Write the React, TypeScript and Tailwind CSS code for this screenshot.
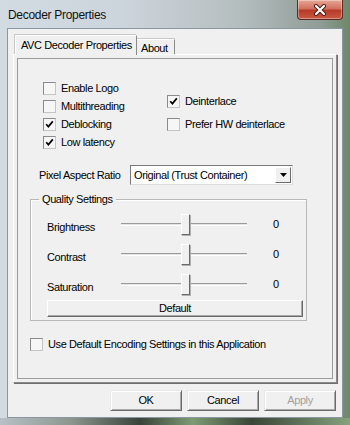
import React from 'react';

const ui = "font-['Liberation_Sans',Arial,sans-serif] text-[11px] tracking-[-0.4px] leading-[13px] text-black";

const CheckBox = ({ checked = false }: { checked?: boolean }) => (
  <span className="w-[13px] h-[13px] shrink-0 flex items-center justify-center bg-[#f6f6f6] border border-t-[#8a8a8a] border-l-[#8a8a8a] border-r-[#c4c4c4] border-b-[#c4c4c4]">
    {checked && (
      <svg width="9" height="9" viewBox="0 0 9 9">
        <path d="M1.2 4.2 L3.4 6.6 L7.8 1.4" stroke="#000" strokeWidth="1.7" fill="none" />
      </svg>
    )}
  </span>
);

const CheckRow = ({ label, checked = false, h = 'h-[18px]' }: { label: string; checked?: boolean; h?: string }) => (
  <div className={`flex items-center gap-[5px] ${h}`}>
    <CheckBox checked={checked} />
    <span className="whitespace-nowrap">{label}</span>
  </div>
);

const Slider = () => (
  <div className="relative w-[126px] h-[30px] shrink-0">
    <div className="absolute left-0 right-0 top-[14px] h-[3px] bg-[#e4e4e4] border-t border-t-[#9a9a9a] border-b border-b-white" />
    <div className="absolute left-[60px] top-[5px] w-[9px] h-[21px] bg-[#f0f0f0] border border-t-white border-l-white border-r-[#6a6a6a] border-b-[#6a6a6a] shadow-[1px_1px_0_#b0b0b0]" />
  </div>
);

const SliderRow = ({ label }: { label: string }) => (
  <div className="flex items-center h-[30px] pl-[16px]">
    <span className="w-[74px] mt-[7px]">{label}</span>
    <Slider />
    <span className="ml-[26px]">0</span>
  </div>
);

const DlgButton = ({ label, disabled = false }: { label: string; disabled?: boolean }) => (
  <button
    className={`w-[72px] h-[21px] bg-[#f0f0f0] border border-t-[#e8e8e8] border-l-[#e8e8e8] border-r-[#6b6b6b] border-b-[#6b6b6b] shadow-[inset_1px_1px_0_#ffffff,inset_-1px_-1px_0_#a8a8a8] ${disabled ? 'text-[#a0a0a0]' : 'text-black'}`}
  >
    {label}
  </button>
);

export default function App() {
  return (
    <div className="w-[350px] h-[425px] flex flex-col overflow-hidden bg-[linear-gradient(90deg,#d2dae2_0%,#cdd5dc_35%,#b3bcbd_70%,#8f9b95_92%,#6d8868_100%)]">
      {/* title bar */}
      <div className="h-[28px] flex items-start shrink-0">
        <span className="pl-[8px] pt-[8px] font-['Liberation_Sans',Arial,sans-serif] text-[12px] leading-[14px] tracking-[-0.3px] text-[#111]">
          Decoder Properties
        </span>
        <div className="ml-auto mr-[7px] w-[46px] h-[20px] rounded-b-[4px] border border-t-0 border-[#5b2a24] bg-[linear-gradient(180deg,#e6a795_0%,#d2705e_45%,#b83a28_55%,#c95a44_100%)] flex items-center justify-center shadow-[inset_0_0_0_1px_rgba(255,255,255,0.35)]">
          <svg width="14" height="12" viewBox="0 0 14 12">
            <path d="M3 2 L11 10 M11 2 L3 10" stroke="#4a1a14" strokeWidth="4" strokeLinecap="round" />
            <path d="M3 2 L11 10 M11 2 L3 10" stroke="#ffffff" strokeWidth="2.2" strokeLinecap="round" />
          </svg>
        </div>
      </div>

      {/* client area */}
      <div className={`mx-[7px] h-[390px] shrink-0 bg-[#f0f0f0] border border-[#8a96a2] px-[5px] pt-[6px] flex flex-col ${ui}`}>
        {/* tabs */}
        <div className="flex items-end h-[19px] pl-[2px] relative z-10">
          <div className="w-[122px] h-[20px] -mb-[1px] bg-[#f0f0f0] border border-b-0 border-t-white border-l-white border-r-[#8a8a8a] shadow-[-1px_-1px_0_#c8c8c8] flex items-center pl-[5px]">
            AVC Decoder Properties
          </div>
          <div className="w-[38px] h-[15px] bg-[#f0f0f0] border border-b-0 border-t-white border-l-0 border-r-[#8a8a8a] shadow-[0_-1px_0_#c8c8c8] flex items-center pl-[4px] pt-[2px]">
            About
          </div>
        </div>

        {/* tab panel */}
        <div className="w-[324px] h-[329px] border border-t-white border-l-white border-r-[#8a8a8a] border-b-[#8a8a8a] shadow-[1px_1px_0_#6e6e6e] p-[3px]">
          <div className="h-full border border-[#9c9c9c] flex flex-col">
            <div className="flex mt-[20px] ml-[25px]">
              <div className="w-[124px] flex flex-col">
                <CheckRow label="Enable Logo" />
                <CheckRow label="Multithreading" />
                <CheckRow label="Deblocking" checked />
                <CheckRow label="Low latency" checked />
              </div>
              <div className="flex flex-col mt-[13px] gap-[5px]">
                <CheckRow label="Deinterlace" checked />
                <CheckRow label="Prefer HW deinterlace" />
              </div>
            </div>

            <div className="flex items-center mt-[14px] ml-[21px] h-[20px]">
              <span className="w-[91px]">Pixel Aspect Ratio</span>
              <div className="w-[163px] h-[20px] bg-white border border-t-[#7a7a7a] border-l-[#7a7a7a] border-r-[#dcdcdc] border-b-[#dcdcdc] flex items-center">
                <span className="pl-[3px] flex-1 whitespace-nowrap">Original (Trust Container)</span>
                <div className="w-[16px] h-[16px] mr-[1px] bg-[#f0f0f0] border border-t-white border-l-white border-r-[#6b6b6b] border-b-[#6b6b6b] flex items-center justify-center">
                  <svg width="7" height="4" viewBox="0 0 7 4">
                    <path d="M0 0 H7 L3.5 4 Z" fill="#000" />
                  </svg>
                </div>
              </div>
            </div>

            <fieldset className="mt-[8px] ml-[12px] w-[277px] border border-[#b8b8b8] shadow-[inset_1px_1px_0_#ffffff] pt-[3px] pb-[3px]">
              <legend className="ml-[8px] px-[3px] leading-[13px]">Quality Settings</legend>
              <SliderRow label="Brightness" />
              <SliderRow label="Contrast" />
              <SliderRow label="Saturation" />
              <button className="mt-[1px] ml-[16px] w-[256px] h-[17px] bg-[#f0f0f0] border border-t-white border-l-white border-r-[#6b6b6b] border-b-[#6b6b6b] shadow-[inset_-1px_-1px_0_#a8a8a8] leading-[13px]">
                Default
              </button>
            </fieldset>

            <div className="mt-[17px] ml-[12px]">
              <CheckRow label="Use Default Encoding Settings in this Application" h="h-[13px]" />
            </div>
          </div>
        </div>

        {/* dialog buttons */}
        <div className="flex justify-end gap-[5px] mt-[7px] pr-[1px]">
          <DlgButton label="OK" />
          <DlgButton label="Cancel" />
          <DlgButton label="Apply" disabled />
        </div>
      </div>

      {/* bottom frame */}
      <div className="flex-1 bg-[linear-gradient(90deg,#b7c0c6_0%,#8d978f_20%,#39433a_40%,#7e9b74_55%,#3a4537_72%,#86a27e_100%)]" />
    </div>
  );
}
